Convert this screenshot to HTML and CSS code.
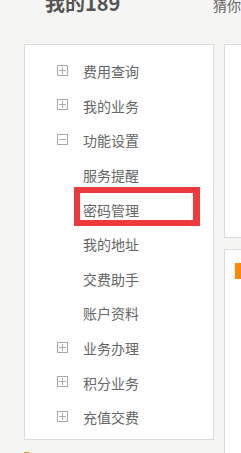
FILE: index.html
```html
<!DOCTYPE html>
<html lang="zh-CN">
<head>
<meta charset="utf-8">
<title>我的189</title>
<link rel="stylesheet" href="styles.css">
</head>
<body>
<div class="page">
  <header class="top">
    <div class="title">我的189</div>
    <div class="guess">猜你喜欢</div>
  </header>
  <div class="main">
    <div class="left">
      <nav class="side">
        <ul class="menu">
          <li class="item"><span class="ico plus"></span><span class="txt">费用查询</span></li>
          <li class="item"><span class="ico plus"></span><span class="txt">我的业务</span></li>
          <li class="item"><span class="ico minus"></span><span class="txt">功能设置</span></li>
          <li class="item sub"><span class="txt">服务提醒</span></li>
          <li class="item sub mark"><span class="txt">密码管理</span><span class="redbox"></span></li>
          <li class="item sub"><span class="txt">我的地址</span></li>
          <li class="item sub"><span class="txt">交费助手</span></li>
          <li class="item sub"><span class="txt">账户资料</span></li>
          <li class="item"><span class="ico plus"></span><span class="txt">业务办理</span></li>
          <li class="item"><span class="ico plus"></span><span class="txt">积分业务</span></li>
          <li class="item"><span class="ico plus"></span><span class="txt">充值交费</span></li>
        </ul>
      </nav>
      <div class="below"><span class="orange"></span></div>
    </div>
    <div class="right">
      <div class="card one"></div>
      <div class="card two"><span class="orange tall"></span></div>
    </div>
  </div>
</div>
</body>
</html>
```
FILE: styles.css
```css
html, body {
  margin: 0;
  padding: 0;
}
body {
  background: #f5f5f3;
  font-family: "Noto Sans CJK SC", "Noto Sans", sans-serif;
  color: #666;
  overflow: hidden;
}
.page {
  width: 241px;
  height: 453px;
  overflow: hidden;
}
.top {
  height: 44px;
  display: flex;
  align-items: flex-start;
}
.title {
  flex: none;
  margin-left: 45px;
  width: 168px;
  font-size: 20px;
  font-weight: bold;
  line-height: 20px;
  margin-top: -7px;
  color: #555;
  white-space: nowrap;
}
.guess {
  flex: none;
  font-size: 14px;
  line-height: 14px;
  margin-top: -2px;
  color: #666;
  white-space: nowrap;
}
.main {
  display: flex;
  align-items: flex-start;
  gap: 10px;
  padding-left: 24px;
}
.left {
  width: 190px;
  flex: none;
}
.side {
  background: #fff;
  border: 1px solid #dcdcdc;
  height: 396px;
  box-sizing: border-box;
  padding-top: 9px;
}
.menu {
  list-style: none;
  margin: 0;
  padding: 0;
}
.item {
  height: 34.6px;
  display: flex;
  align-items: center;
  padding-left: 32px;
  position: relative;
  font-size: 14px;
}
.item .txt {
  margin-left: 15px;
  line-height: 14px;
  white-space: nowrap;
}
.item.sub::before {
  content: "";
  width: 11px;
  flex: none;
}
.ico {
  width: 11px;
  height: 11px;
  box-sizing: border-box;
  border: 1px solid #aaa;
  position: relative;
  flex: none;
  margin-top: -2px;
}
.ico::before,
.ico::after {
  content: "";
  position: absolute;
  background: #aaa;
}
.ico::before {
  left: 1px;
  right: 1px;
  top: 4px;
  height: 1px;
}
.plus::after {
  top: 1px;
  bottom: 1px;
  left: 4px;
  width: 1px;
}
.minus::after {
  display: none;
}
.redbox {
  position: absolute;
  left: 49px;
  top: -5px;
  width: 126px;
  height: 39px;
  box-sizing: border-box;
  border: 6px solid #ef3a3d;
  border-right-width: 7px;
}
.below {
  padding-top: 12px;
}
.orange {
  display: block;
  width: 5px;
  height: 3px;
  background: #ff8a00;
}
.right {
  flex: 1;
  display: flex;
  flex-direction: column;
  gap: 11px;
}
.card {
  background: #fff;
  border: 1px solid #dcdcdc;
  border-right: none;
  box-sizing: border-box;
}
.card.one {
  height: 194px;
}
.card.two {
  height: 300px;
  padding: 13px 0 0 10px;
}
.orange.tall {
  height: 16px;
  width: 6px;
}
```
